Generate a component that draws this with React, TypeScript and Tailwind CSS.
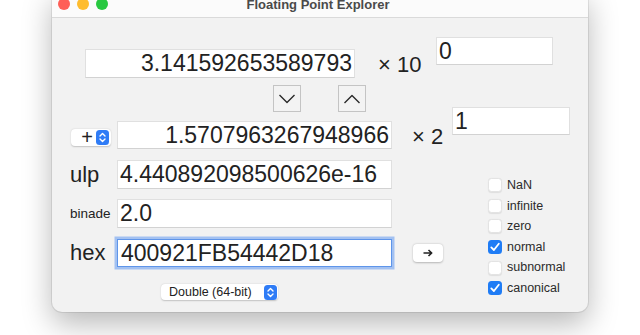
import React from "react";

const font = { fontFamily: '"Liberation Sans", Arial, sans-serif' };

function Stepper() {
    return (
        <svg width="13" height="15" viewBox="0 0 13 15" className="shrink-0">
            <rect x="0" y="0" width="13" height="15" rx="3.5" fill="#2f7cf6" />
            <path d="M4 6 L6.5 3.5 L9 6" stroke="white" strokeWidth="1.4" fill="none" strokeLinecap="round" strokeLinejoin="round" />
            <path d="M4 9 L6.5 11.5 L9 9" stroke="white" strokeWidth="1.4" fill="none" strokeLinecap="round" strokeLinejoin="round" />
        </svg>
    );
}

function Field({ value, className, right }: { value: string; className: string; right?: boolean }) {
    return (
        <div className={`bg-white border border-[#e0e0e0] border-b-[#d2d2d2] flex items-center text-[23px] text-[#222] leading-none ${right ? "justify-end pr-[2px]" : "pl-[2px]"} ${className}`}>
            {value}
        </div>
    );
}

function StepButton({ up }: { up?: boolean }) {
    return (
        <div className="w-[28px] h-[27px] border border-[#c4c4c4] bg-[#f3f3f3] flex items-center justify-center">
            <svg width="18" height="10" viewBox="0 0 18 10">
                <path d={up ? "M1.5 9 L9 1.5 L16.5 9" : "M1.5 1 L9 8.5 L16.5 1"} stroke="#2a2a2a" strokeWidth="1.4" fill="none" strokeLinejoin="round" />
            </svg>
        </div>
    );
}

function Check({ label, checked }: { label: string; checked?: boolean }) {
    return (
        <div className="h-[20.6px] flex items-center gap-[5px]">
            {checked ? (
                <svg width="14" height="14" viewBox="0 0 14 14">
                    <rect width="14" height="14" rx="3.5" fill="#1f7cf5" />
                    <path d="M3.3 7.4 L5.9 10 L10.8 3.8" stroke="white" strokeWidth="1.8" fill="none" strokeLinecap="round" strokeLinejoin="round" />
                </svg>
            ) : (
                <div className="w-[14px] h-[14px] rounded-[3.5px] bg-white border border-[#e3e3e3] shadow-[0_0.5px_1px_rgba(0,0,0,0.08)]" />
            )}
            <span className="text-[12.5px] text-[#2b2b2b]">{label}</span>
        </div>
    );
}

export default function App() {
    return (
        <div className="w-[640px] h-[335px] bg-white overflow-hidden" style={font}>
            <div className="ml-[52px] -mt-[10px] w-[536px] rounded-b-[10px] bg-[#f2f2f2] shadow-[0_12px_30px_rgba(0,0,0,0.28),0_0_0_1px_rgba(0,0,0,0.08)] overflow-hidden">
                <div className="h-[28px] bg-[#fbfbfb] border-b border-[#dadada] flex items-center">
                    <div className="flex gap-[7px] ml-[6px] mt-[1px]">
                        <div className="w-[12px] h-[12px] rounded-full bg-[#fe5f57]" />
                        <div className="w-[12px] h-[12px] rounded-full bg-[#febc2e]" />
                        <div className="w-[12px] h-[12px] rounded-full bg-[#28c840]" />
                    </div>
                    <div className="flex-1 text-center text-[13px] font-bold text-[#4a4a4a] -ml-[60px] mt-[2px]">Floating Point Explorer</div>
                </div>

                <div className="flex items-start mt-[31px] pl-[33px]">
                    <Field value="3.141592653589793" right className="w-[270px] h-[29px]" />
                    <div className="ml-[23px] w-[58px] h-[29px] flex items-center pt-[3px] text-[22px] leading-none text-[#222]">× 10</div>
                    <Field value="0" className="w-[117px] h-[28px] -mt-[12px] items-start pt-[2px]" />
                </div>

                <div className="flex mt-[7px] pl-[221px] gap-[37px]">
                    <StepButton />
                    <StepButton up />
                </div>

                <div className="flex items-start mt-[9px] pl-[19px]">
                    <div className="mt-[8px] w-[40px] h-[17px] bg-white rounded-[4px] shadow-[0_0.5px_1.5px_rgba(0,0,0,0.2)] flex items-center justify-end pr-[2px] gap-[3px]">
                        <span className="text-[20px] leading-none text-[#222] -mt-[2px]">+</span>
                        <Stepper />
                    </div>
                    <Field value="1.5707963267948966" right className="ml-[6px] w-[275px] h-[28px]" />
                    <div className="ml-[20px] w-[40px] h-[28px] flex items-center pt-[4px] text-[22px] leading-none text-[#222]">× 2</div>
                    <Field value="1" className="w-[118px] h-[28px] -mt-[14px] items-start pt-[2px]" />
                </div>

                <div className="flex items-start">
                    <div className="flex flex-col">
                        <div className="flex items-center mt-[11px] pl-[18px] h-[29px]">
                            <span className="w-[47px] text-[22px] leading-none text-[#222]">ulp</span>
                            <Field value="4.440892098500626e-16" className="w-[275px] h-[29px]" />
                        </div>
                        <div className="flex items-center mt-[10px] pl-[18px] h-[29px]">
                            <span className="w-[47px] text-[13.5px] leading-none text-[#222]">binade</span>
                            <Field value="2.0" className="w-[275px] h-[29px]" />
                        </div>
                        <div className="flex items-center mt-[11px] pl-[18px] h-[28px]">
                            <span className="w-[47px] text-[22px] leading-none text-[#222]">hex</span>
                            <div className="w-[275px] h-[28px] bg-white border border-[#5e95ea] shadow-[0_0_0_2.5px_#a3c1f1] flex items-center pl-[3px] text-[23px] text-[#222] leading-none">
                                400921FB54442D18
                            </div>
                            <div className="ml-[21px] w-[30px] h-[18px] bg-white rounded-[4px] shadow-[0_0.5px_2px_rgba(0,0,0,0.25)] flex items-center justify-center">
                                <svg width="10" height="8" viewBox="0 0 10 8">
                                    <path d="M0.5 4 H8.5 M5.5 1 L8.7 4 L5.5 7" stroke="#222" strokeWidth="1.6" fill="none" strokeLinejoin="round" />
                                </svg>
                            </div>
                        </div>
                        <div className="flex mt-[17px] pl-[109px] pb-[12px]">
                            <div className="w-[117px] h-[16px] bg-white rounded-[4px] shadow-[0_0.5px_1.5px_rgba(0,0,0,0.2)] flex items-center justify-between pl-[8px] pr-[1px]">
                                <span className="text-[12.5px] leading-none text-[#222]">Double (64-bit)</span>
                                <Stepper />
                            </div>
                        </div>
                    </div>
                    <div className="flex flex-col ml-[45px] mt-[26px]">
                        <Check label="NaN" />
                        <Check label="infinite" />
                        <Check label="zero" />
                        <Check label="normal" checked />
                        <Check label="subnormal" />
                        <Check label="canonical" checked />
                    </div>
                </div>
            </div>
        </div>
    );
}
